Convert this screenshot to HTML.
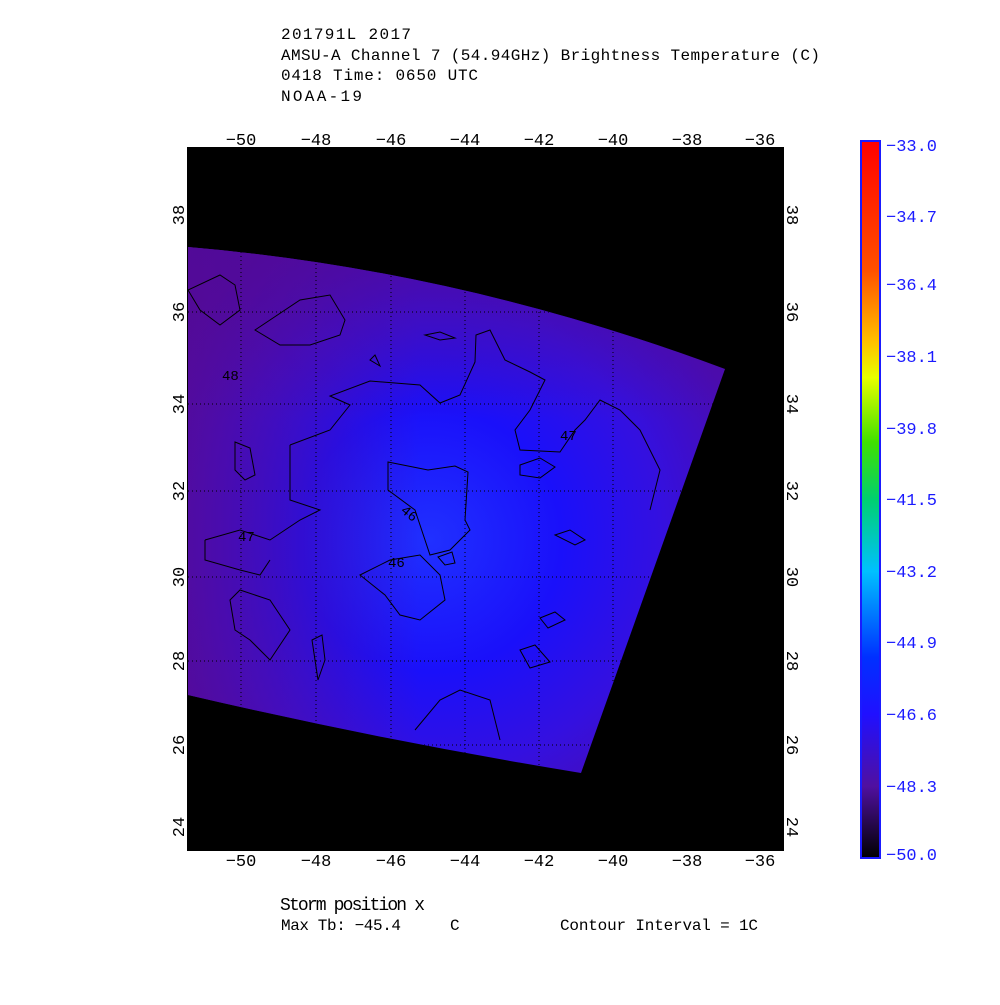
<!DOCTYPE html>
<html><head><meta charset="utf-8"><style>
html,body{margin:0;padding:0;background:#fff;}
svg text{font-family:"Liberation Mono",monospace;}
</style></head><body>
<svg width="1000" height="1000" viewBox="0 0 1000 1000" xmlns="http://www.w3.org/2000/svg">
<defs>
<radialGradient id="rg" cx="430" cy="540" r="330" gradientUnits="userSpaceOnUse">
<stop offset="0" stop-color="#2030ff"/>
<stop offset="0.4" stop-color="#1a10fa"/>
<stop offset="0.7" stop-color="#3410e0"/>
<stop offset="1" stop-color="#4a0cb0"/>
</radialGradient>
<linearGradient id="lp" x1="188" y1="0" x2="420" y2="0" gradientUnits="userSpaceOnUse">
<stop offset="0" stop-color="#580a90" stop-opacity="0.75"/>
<stop offset="1" stop-color="#580a90" stop-opacity="0"/>
</linearGradient>
<linearGradient id="tp" x1="0" y1="250" x2="0" y2="420" gradientUnits="userSpaceOnUse">
<stop offset="0" stop-color="#500a98" stop-opacity="0.7"/>
<stop offset="1" stop-color="#500a98" stop-opacity="0"/>
</linearGradient>
<linearGradient id="cb" x1="0" y1="0" x2="0" y2="1">
<stop offset="0" stop-color="#ff0000"/>
<stop offset="0.18" stop-color="#ff5000"/>
<stop offset="0.28" stop-color="#ffc000"/>
<stop offset="0.33" stop-color="#e8ff00"/>
<stop offset="0.42" stop-color="#40e000"/>
<stop offset="0.5" stop-color="#00d070"/>
<stop offset="0.6" stop-color="#00c0ff"/>
<stop offset="0.72" stop-color="#0030ff"/>
<stop offset="0.8" stop-color="#2010ff"/>
<stop offset="0.9" stop-color="#5010a0"/>
<stop offset="1" stop-color="#000000"/>
</linearGradient>
<clipPath id="sw"><path d="M188,247 Q460,270 725,369 L581,773 Q380,740 188,695 Z"/></clipPath>
</defs>
<g font-size="16" fill="#000">
<text x="281" y="39" textLength="130">201791L 2017</text>
<text x="281" y="60" textLength="539">AMSU-A Channel 7 (54.94GHz) Brightness Temperature (C)</text>
<text x="281" y="80" textLength="197">0418 Time: 0650 UTC</text>
<text x="281" y="101" textLength="81">NOAA-19</text>
</g>
<rect x="186" y="146" width="599" height="706" fill="#000" stroke="#fff" stroke-width="2"/>
<g clip-path="url(#sw)">
<rect x="188" y="240" width="540" height="540" fill="url(#rg)"/>
<rect x="188" y="240" width="540" height="540" fill="url(#lp)"/>
<rect x="188" y="240" width="540" height="540" fill="url(#tp)"/>
<g stroke="#000" stroke-width="1" stroke-dasharray="1,3">
<line x1="241" y1="240" x2="241" y2="780"/><line x1="316" y1="240" x2="316" y2="780"/>
<line x1="391" y1="240" x2="391" y2="780"/><line x1="465" y1="240" x2="465" y2="780"/>
<line x1="539" y1="240" x2="539" y2="780"/><line x1="613" y1="240" x2="613" y2="780"/>
<line x1="188" y1="312" x2="730" y2="312"/><line x1="188" y1="404" x2="730" y2="404"/>
<line x1="188" y1="491" x2="730" y2="491"/><line x1="188" y1="577" x2="730" y2="577"/>
<line x1="188" y1="661" x2="730" y2="661"/><line x1="188" y1="745" x2="730" y2="745"/>
</g>
<g fill="none" stroke="#000" stroke-width="1">
<path d="M388,462 L428,470 L455,466 L468,472 L465,520 L470,530 L450,550 L430,555 L425,540 L415,510 L388,490 Z"/>
<path d="M290,445 L330,430 L350,405 L330,396 L370,381 L420,385 L440,403 L460,395 L475,362 L476,335 L490,330 L505,360 L530,372 L545,380 L530,410 L515,430 L520,450 L560,452 L575,430 L585,420 L600,400 L620,410 L640,430 L660,470 L650,510"/>
<path d="M235,442 L250,448 L255,475 L245,480 L235,470 Z"/>
<path d="M205,540 L240,530 L270,540 L300,520 L320,510 L290,500 L290,445"/>
<path d="M205,540 L205,560 L240,570 L260,575 L270,560"/>
<path d="M520,465 L540,458 L555,467 L540,478 L520,475 Z"/>
<path d="M540,618 L555,612 L565,620 L548,628 Z"/>
<path d="M520,650 L535,645 L550,662 L530,668 Z"/>
<path d="M555,535 L570,530 L585,540 L575,545 Z"/>
<path d="M415,730 L440,700 L460,690 L490,700 L500,740"/>
<path d="M230,600 L240,590 L270,600 L290,630 L270,660 L250,640 L235,630 Z"/>
<path d="M312,640 L322,635 L325,660 L318,680 Z"/>
<path d="M188,290 L220,275 L235,285 L240,310 L220,325 L200,310 Z"/>
<path d="M255,330 L300,300 L330,295 L345,320 L340,335 L310,345 L280,345 Z"/>
<path d="M425,335 L440,332 L455,338 L440,340 Z"/>
<path d="M370,360 L375,355 L380,366 Z"/>
<path d="M360,575 L390,560 L420,555 L440,575 L445,600 L420,620 L400,615 L385,595 Z"/>
<path d="M438,557 L452,552 L455,563 L445,565 Z"/>
</g>
<g font-size="14" fill="#000">
<text x="222" y="380">48</text><text x="560" y="440">47</text>
<text x="238" y="541">47</text><text x="402" y="518" transform="rotate(40 410 512)">46</text>
<text x="388" y="567">46</text>
</g>
</g>
<g font-size="17" fill="#000" text-anchor="middle">
<text x="241" y="145">−50</text><text x="316" y="145">−48</text><text x="391" y="145">−46</text><text x="465" y="145">−44</text><text x="539" y="145">−42</text><text x="613" y="145">−40</text><text x="687" y="145">−38</text><text x="760" y="145">−36</text>
<text x="241" y="866">−50</text><text x="316" y="866">−48</text><text x="391" y="866">−46</text><text x="465" y="866">−44</text><text x="539" y="866">−42</text><text x="613" y="866">−40</text><text x="687" y="866">−38</text><text x="760" y="866">−36</text>
</g>
<g font-size="17" fill="#000" text-anchor="middle">
<text transform="translate(184,215) rotate(-90)">38</text><text transform="translate(184,312) rotate(-90)">36</text><text transform="translate(184,404) rotate(-90)">34</text><text transform="translate(184,491) rotate(-90)">32</text><text transform="translate(184,577) rotate(-90)">30</text><text transform="translate(184,661) rotate(-90)">28</text><text transform="translate(184,745) rotate(-90)">26</text><text transform="translate(184,827) rotate(-90)">24</text>
<text transform="translate(787,215) rotate(90)">38</text><text transform="translate(787,312) rotate(90)">36</text><text transform="translate(787,404) rotate(90)">34</text><text transform="translate(787,491) rotate(90)">32</text><text transform="translate(787,577) rotate(90)">30</text><text transform="translate(787,661) rotate(90)">28</text><text transform="translate(787,745) rotate(90)">26</text><text transform="translate(787,827) rotate(90)">24</text>
</g>
<rect x="861" y="141" width="19" height="717" fill="url(#cb)" stroke="#1a1aff" stroke-width="2"/>
<g font-size="17" fill="#1a1aff">
<text x="886" y="151">−33.0</text><text x="886" y="222">−34.7</text><text x="886" y="290">−36.4</text><text x="886" y="362">−38.1</text><text x="886" y="434">−39.8</text><text x="886" y="505">−41.5</text><text x="886" y="577">−43.2</text><text x="886" y="648">−44.9</text><text x="886" y="720">−46.6</text><text x="886" y="792">−48.3</text><text x="886" y="860">−50.0</text>
</g>
<text x="280" y="910" font-size="18" fill="#000" textLength="145">Storm position x</text>
<text x="281" y="930" font-size="16" fill="#000" textLength="120">Max Tb: −45.4</text>
<text x="450" y="930" font-size="16" fill="#000">C</text>
<text x="560" y="930" font-size="16" fill="#000" textLength="198">Contour Interval = 1C</text>
</svg>
</body></html>
